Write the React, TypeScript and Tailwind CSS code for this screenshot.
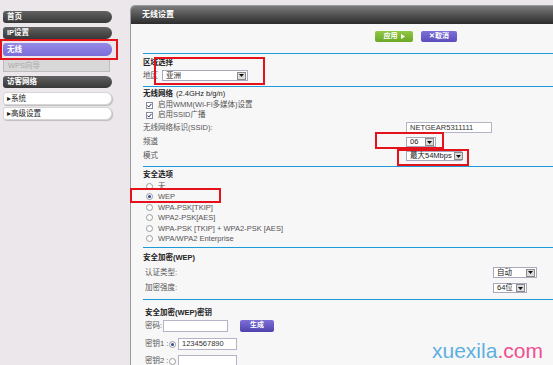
import React from "react"

const font = "font-['Liberation_Sans','Noto_Sans_CJK_SC',sans-serif]"

function Arrow() {
	return (
		<span className="ml-auto mr-[1px] flex h-[8px] w-[9px] shrink-0 items-center justify-center border border-[#8a8a8a] bg-[#dcdcdc]">
			<svg width="5" height="3" viewBox="0 0 5 3">
				<path d="M0 0h5L2.5 3z" fill="#111" />
			</svg>
		</span>
	)
}

function Select({ value, className }: { value: string; className: string }) {
	return (
		<div className={`flex items-center whitespace-nowrap border border-[#a9a9bd] bg-white pl-[3px] text-[7.5px] text-[#222] ${className}`}>
			<span>{value}</span>
			<Arrow />
		</div>
	)
}

function Input({ value = "", className }: { value?: string; className: string }) {
	return (
		<div className={`flex items-center whitespace-nowrap border border-[#b4b4c8] bg-white pl-[3px] text-[7.5px] text-[#333] ${className}`}>
			{value}
		</div>
	)
}

function Radio({ checked = false }: { checked?: boolean }) {
	return (
		<span className="flex h-[7px] w-[7px] items-center justify-center rounded-full border border-[#9a9a9a] bg-white">
			{checked && <span className="h-[3px] w-[3px] rounded-full bg-[#2a4a8a]" />}
		</span>
	)
}

function Checkbox() {
	return (
		<span className="flex h-[7px] w-[7px] items-center justify-center border border-[#8a8a9a] bg-white">
			<svg width="5" height="5" viewBox="0 0 5 5">
				<path d="M0.5 2.5l1.3 1.5L4.5 0.8" stroke="#1a2a6a" strokeWidth="1" fill="none" />
			</svg>
		</span>
	)
}

function Line({ className }: { className: string }) {
	return <div className={`h-px bg-[#1d9ad8] ${className}`} />
}

const navDark = "flex h-[12px] w-[109px] items-center rounded-l-[3px] rounded-r-[6px] bg-linear-to-b from-[#626262] to-[#383838] pl-[4px] text-[7.5px] font-bold text-white"
const navLight = "flex h-[13px] w-[109px] items-center rounded-l-[3px] rounded-r-[6px] border border-[#d6d6d6] bg-white pl-[3px] text-[7.5px] text-[#222] shadow-[1px_1px_1px_#bdbdbd]"

export default function App() {
	return (
		<div className={`relative flex h-[365px] w-[553px] overflow-hidden bg-[#ebe7ea] ${font}`}>
			{/* sidebar */}
			<div className="flex w-[130px] shrink-0 flex-col pl-[3px] pt-[11px]">
				<div className={navDark}>首页</div>
				<div className={`${navDark} mt-[4px]`}>IP设置</div>
				<div className="mt-[4px] flex h-[13px] w-[109px] items-center rounded-l-[3px] rounded-r-[6px] bg-linear-to-b from-[#958ae6] to-[#7a6dd8] pl-[4px] text-[7.5px] font-bold text-white">
					无线
				</div>
				<div className="mt-[3px] flex h-[13px] w-[107px] items-center border border-[#bdbdbd] bg-[#d8d8d8] pl-[4px] text-[7.5px] text-[#a9a9a9]">
					WPS向导
				</div>
				<div className={`${navDark} mt-[4px]`}>访客网络</div>
				<div className={`${navLight} mt-[4px]`}>▸系统</div>
				<div className={`${navLight} mt-[2px]`}>▸高级设置</div>
			</div>

			{/* main panel */}
			<div className="mt-[5px] flex flex-1 flex-col overflow-hidden rounded-tl-[5px] border-l border-t border-[#9c9c9c] bg-[#f8f7f8]">
				<div className="flex h-[18px] shrink-0 items-center bg-linear-to-b from-[#7c7c7c] to-[#2c2c2c] pl-[11px] text-[8px] font-bold text-white">
					无线设置
				</div>
				<div className="flex flex-col pl-[12px] text-[7.5px] text-[#555]">
					<div className="ml-[232px] mt-[7px] flex h-[11px] gap-[8px]">
						<div className="flex w-[38px] items-center justify-center gap-[3px] rounded-[2px] bg-linear-to-b from-[#92c846] to-[#6aa824] text-[7px] font-bold text-white">
							应用
							<svg width="4" height="5" viewBox="0 0 4 5">
								<path d="M0 0l4 2.5L0 5z" fill="#fff" />
							</svg>
						</div>
						<div className="flex w-[36px] items-center justify-center rounded-[2px] bg-linear-to-b from-[#7d70d8] to-[#5b4dbb] text-[7px] font-bold text-white">
							✕取消
						</div>
					</div>
					<Line className="mt-[11px]" />

					{/* region */}
					<div className="mt-[2px] flex h-[13px] items-center font-bold text-[#222]">区域选择</div>
					<div className="mt-[1px] flex h-[11px] items-center">
						<span className="w-[19px]">地区</span>
						<Select value="亚洲" className="h-[11px] w-[86px]" />
					</div>
					<Line className="mt-[5px]" />

					{/* wireless network */}
					<div className="mt-[1px] flex h-[12px] items-center text-[#222]">
						<span className="font-bold">无线网络</span>
						<span className="ml-[3px]">(2.4GHz b/g/n)</span>
					</div>
					<div className="flex h-[10px] items-center gap-[5px] pl-[3px]">
						<Checkbox />
						<span>启用WMM(Wi-Fi多媒体)设置</span>
					</div>
					<div className="flex h-[10px] items-center gap-[5px] pl-[3px]">
						<Checkbox />
						<span>启用SSID广播</span>
					</div>
					<div className="mt-[2px] flex h-[11px] items-center">
						<span className="w-[263px]">无线网络标识(SSID):</span>
						<Input value="NETGEAR5311111" className="h-[11px] w-[86px] text-[#5a4a8a]" />
					</div>
					<div className="mt-[4px] flex h-[10px] items-center">
						<span className="w-[263px]">频道</span>
						<Select value="06" className="h-[10px] w-[30px]" />
					</div>
					<div className="mt-[4px] flex h-[10px] items-center">
						<span className="w-[263px]">模式</span>
						<Select value="最大54Mbps" className="h-[10px] w-[56px] gap-[2px]" />
					</div>
					<Line className="mt-[5px]" />

					{/* security options */}
					<div className="mt-[2px] flex h-[12px] items-center font-bold text-[#222]">安全选项</div>
					{["无", "WEP", "WPA-PSK[TKIP]", "WPA2-PSK[AES]", "WPA-PSK [TKIP] + WPA2-PSK [AES]", "WPA/WPA2 Enterprise"].map((o) => (
						<div key={o} className="flex h-[10.5px] items-center gap-[5px] pl-[3px]">
							<Radio checked={o === "WEP"} />
							<span>{o}</span>
						</div>
					))}
					<Line className="mt-[3px]" />

					{/* wep */}
					<div className="mt-[4px] flex h-[12px] items-center font-bold text-[#222]">安全加密(WEP)</div>
					<div className="mt-[3px] flex h-[11px] items-center pl-[2px]">
						<span className="w-[348px]">认证类型:</span>
						<Select value="自动" className="h-[11px] w-[44px]" />
					</div>
					<div className="mt-[5px] flex h-[10px] items-center pl-[2px]">
						<span className="w-[348px]">加密强度:</span>
						<Select value="64位" className="h-[10px] w-[34px]" />
					</div>
					<Line className="mt-[6px]" />

					{/* wep key */}
					<div className="mt-[7px] flex h-[12px] items-center pl-[2px] font-bold text-[#222]">安全加密(WEP)密钥</div>
					<div className="flex h-[13px] items-center pl-[2px]">
						<span className="w-[18px]">密码:</span>
						<Input className="h-[12px] w-[65px]" />
						<div className="ml-[12px] flex h-[12px] w-[34px] items-center justify-center rounded-[2px] bg-linear-to-b from-[#7d70d8] to-[#4f42ad] text-[7px] font-bold text-white">
							生成
						</div>
					</div>
					<div className="mt-[6px] flex h-[12px] items-center pl-[2px]">
						<span className="w-[24px]">密钥1 :</span>
						<Radio checked />
						<Input value="1234567890" className="ml-[2px] h-[12px] w-[59px]" />
					</div>
					<div className="mt-[5px] flex h-[12px] items-center pl-[2px]">
						<span className="w-[24px]">密钥2 :</span>
						<Radio />
						<Input className="ml-[2px] h-[12px] w-[59px]" />
					</div>
				</div>
			</div>

			{/* red annotation boxes */}
			<div className="absolute left-0 top-[39px] h-[21px] w-[118px] border-2 border-[#e5121b]" />
			<div className="absolute left-[154px] top-[57px] h-[28px] w-[111px] border-2 border-[#e5121b]" />
			<div className="absolute left-[375px] top-[132px] h-[17px] w-[69px] border-2 border-[#e5121b]" />
			<div className="absolute left-[397px] top-[149px] h-[17px] w-[72px] border-2 border-[#e5121b]" />
			<div className="absolute left-[130px] top-[188px] h-[15px] w-[91px] border-2 border-[#e5121b]" />

			{/* watermark */}
			<div className="absolute left-[432px] top-[339px] font-['Liberation_Sans',sans-serif] text-[21px] leading-[24px]">
				<span className="text-[#5eb0e0]">xuexila</span>
				<span className="text-[#f04f8f]">.com</span>
			</div>
		</div>
	)
}
